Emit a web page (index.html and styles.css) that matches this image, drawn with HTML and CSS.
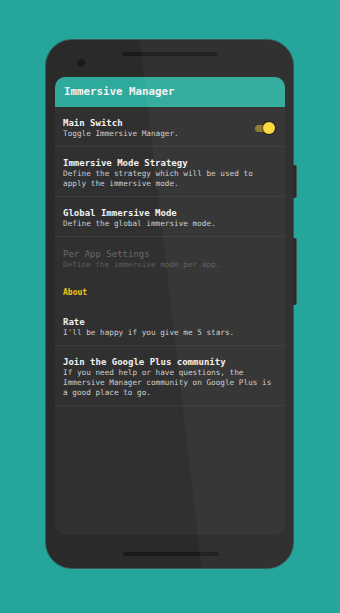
FILE: index.html
```html
<!DOCTYPE html>
<html>
<head>
<meta charset="utf-8">
<link rel="stylesheet" href="styles.css">
</head>
<body>
<div class="phone">
  <div class="side-btn side-btn-1"></div>
  <div class="side-btn side-btn-2"></div>
  <div class="top">
    <div class="camera"></div>
    <div class="speaker"></div>
  </div>
  <div class="screen">
    <div class="appbar">Immersive Manager</div>
    <div class="row divided with-toggle">
      <div class="texts">
        <div class="title">Main Switch</div>
        <div class="sub">Toggle Immersive Manager.</div>
      </div>
      <div class="toggle"><div class="track"></div><div class="thumb"></div></div>
    </div>
    <div class="row divided">
      <div class="title">Immersive Mode Strategy</div>
      <div class="sub">Define the strategy which will be used to<br>apply the immersive mode.</div>
    </div>
    <div class="row divided">
      <div class="title">Global Immersive Mode</div>
      <div class="sub">Define the global immersive mode.</div>
    </div>
    <div class="row disabled">
      <div class="title">Per App Settings</div>
      <div class="sub">Define the immersive mode per app.</div>
    </div>
    <div class="category">About</div>
    <div class="row divided">
      <div class="title">Rate</div>
      <div class="sub">I'll be happy if you give me 5 stars.</div>
    </div>
    <div class="row divided">
      <div class="title">Join the Google Plus community</div>
      <div class="sub">If you need help or have questions, the<br>Immersive Manager community on Google Plus is<br>a good place to go.</div>
    </div>
  </div>
  <div class="bottom">
    <div class="speaker"></div>
  </div>
  <div class="shade"></div>
</div>
</body>
</html>
```
FILE: styles.css
```css
html, body {
  margin: 0;
  padding: 0;
}
body {
  width: 340px;
  height: 613px;
  background: #26a69a;
  overflow: hidden;
  font-family: "DejaVu Sans Mono", "Liberation Mono", monospace;
}
.phone {
  position: relative;
  margin: 40px 0 0 46px;
  width: 247px;
  height: 528px;
  box-sizing: border-box;
  padding: 0 8px 0 9px;
  background: #2a2a2a;
  border-radius: 26px;
  box-shadow: 0 0 0 1px rgba(70, 25, 35, 0.55);
  display: flex;
  flex-direction: column;
}
.side-btn {
  position: absolute;
  right: -3px;
  width: 4px;
  background: #2a2a2a;
  border-radius: 0 2px 2px 0;
  box-shadow: 1px 0 0 rgba(70, 25, 35, 0.55);
}
.side-btn-1 { top: 125px; height: 33px; }
.side-btn-2 { top: 198px; height: 67px; }
.top {
  height: 37px;
  display: flex;
  align-items: flex-start;
  padding-left: 22px;
}
.camera {
  width: 8px;
  height: 8px;
  border-radius: 50%;
  background: #1b1b1b;
  margin-top: 19px;
}
.speaker {
  width: 96px;
  height: 4px;
  border-radius: 2px;
  background: #1a1a1a;
}
.top .speaker {
  margin-top: 12px;
  margin-left: 37px;
}
.screen {
  height: 458px;
  background: #303030;
  border-radius: 10px;
  overflow: hidden;
}
.appbar {
  height: 30px;
  background: #2eaa9c;
  color: #f4f4f4;
  font-weight: bold;
  font-size: 10.8px;
  line-height: 30px;
  padding-left: 9px;
}
.row {
  padding: 10px 10px 7px 8px;
}
.row.divided {
  border-bottom: 1px solid #3b3b3b;
}
.with-toggle {
  display: flex;
  align-items: center;
  justify-content: space-between;
  height: 40px;
  box-sizing: border-box;
}
.title {
  color: #f2f2f2;
  font-weight: bold;
  font-size: 9px;
  line-height: 12px;
  white-space: nowrap;
}
.sub {
  color: #cdcdcd;
  font-size: 7.7px;
  line-height: 10px;
  white-space: nowrap;
}
.row.disabled {
  padding-top: 11px;
}
.disabled .title {
  color: #6b6b6b;
  font-weight: normal;
}
.disabled .sub {
  color: #5e5e5e;
}
.category {
  color: #f5c518;
  font-size: 8px;
  font-weight: bold;
  line-height: 10px;
  padding: 11px 8px 8px 8px;
}
.toggle {
  display: flex;
  align-items: center;
  width: 20px;
  height: 12px;
}
.track {
  width: 16px;
  height: 7px;
  border-radius: 4px;
  background: #8a7a2c;
}
.thumb {
  width: 12px;
  height: 12px;
  border-radius: 50%;
  background: #fdd835;
  margin-left: -8px;
  box-shadow: 0 0 1px 1px rgba(0, 0, 0, 0.45);
}
.bottom {
  flex: 1;
  display: flex;
  justify-content: center;
  align-items: flex-start;
}
.bottom .speaker {
  margin-top: 17px;
  margin-left: 1px;
}
.shade {
  position: absolute;
  inset: 0;
  border-radius: 26px;
  background: rgba(255, 255, 255, 0.035);
  clip-path: polygon(38% 0, 100% 0, 100% 100%, 63% 100%);
  pointer-events: none;
}
```
